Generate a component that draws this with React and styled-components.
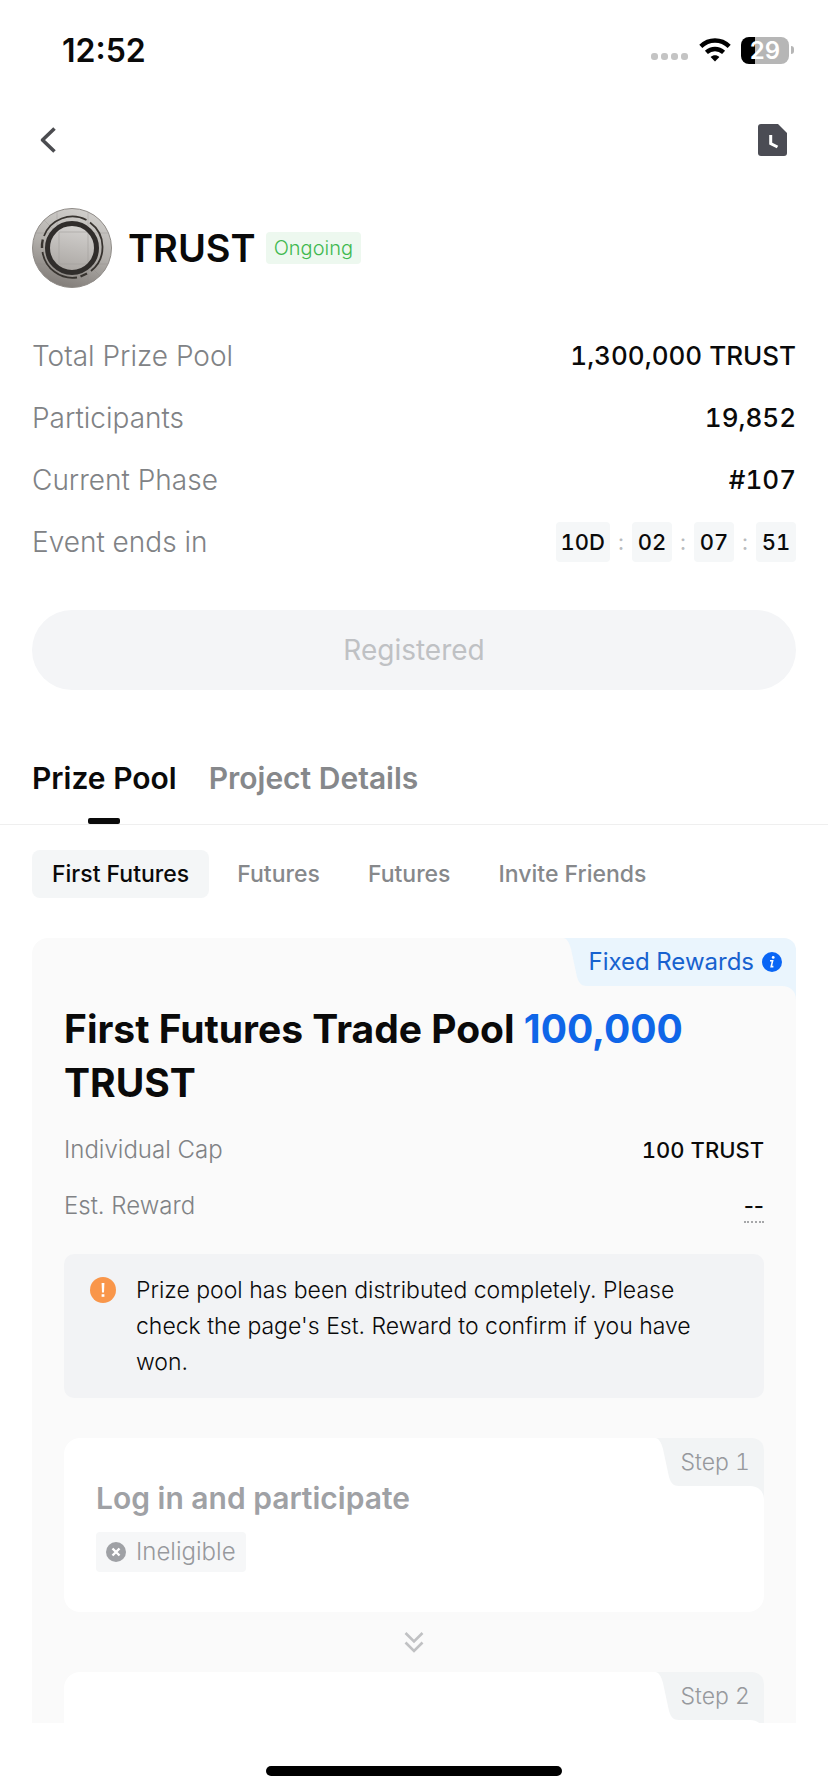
import { useState } from "react";
import styled, { createGlobalStyle } from "styled-components";

const steps = [
  { label: "Step 1", title: "Log in and participate", status: "Ineligible" },
  { label: "Step 2" },
];

const tabs = ["Prize Pool", "Project Details"];
const pools = ["First Futures", "Futures", "Futures", "Invite Friends"];
const countdown = ["10D", "02", "07", "51"];

export default function App() {
  const [tab, setTab] = useState(0);
  const [pool, setPool] = useState(0);

  return (
    <Page>
      <GlobalStyle />
      <StatusBar>
        <Clock>12:52</Clock>
        <StatusIcons>
          <SignalDots />
          <WifiIcon />
          <Battery>
            <BatteryBody>29</BatteryBody>
            <BatteryNub />
          </Battery>
        </StatusIcons>
      </StatusBar>

      <NavBar>
        <IconButton type="button" aria-label="Back">
          <BackIcon />
        </IconButton>
        <IconButton type="button" aria-label="History">
          <RecordIcon />
        </IconButton>
      </NavBar>

      <Content>
        <Header>
          <CoinLogo />
          <h1>TRUST</h1>
          <StatusTag>Ongoing</StatusTag>
        </Header>

        <InfoList>
          <InfoRow>
            <dt>Total Prize Pool</dt>
            <dd>1,300,000 TRUST</dd>
          </InfoRow>
          <InfoRow>
            <dt>Participants</dt>
            <dd>19,852</dd>
          </InfoRow>
          <InfoRow>
            <dt>Current Phase</dt>
            <dd>#107</dd>
          </InfoRow>
          <InfoRow>
            <dt>Event ends in</dt>
            <Countdown>
              {countdown.map((part, i) => (
                <CountdownPart key={part}>
                  {i > 0 && <Colon>:</Colon>}
                  <TimeBox>{part}</TimeBox>
                </CountdownPart>
              ))}
            </Countdown>
          </InfoRow>
        </InfoList>

        <RegisterButton type="button" disabled>
          Registered
        </RegisterButton>

        <Tabs>
          {tabs.map((name, i) => (
            <Tab
              key={name}
              type="button"
              $active={tab === i}
              onClick={() => setTab(i)}
            >
              {name}
            </Tab>
          ))}
        </Tabs>

        <PoolTabs>
          {pools.map((name, i) => (
            <PoolTab
              key={i}
              type="button"
              $active={pool === i}
              onClick={() => setPool(i)}
            >
              {name}
            </PoolTab>
          ))}
        </PoolTabs>

        <PoolCard>
          <CornerLabel tone="blue">
            Fixed Rewards
            <InfoIcon />
          </CornerLabel>
          <h2>
            First Futures Trade Pool <span>100,000</span> TRUST
          </h2>
          <CapList>
            <CapRow>
              <dt>Individual Cap</dt>
              <dd>100 TRUST</dd>
            </CapRow>
            <CapRow>
              <dt>Est. Reward</dt>
              <dd>
                <Dotted>--</Dotted>
              </dd>
            </CapRow>
          </CapList>
          <Notice>
            <div className="icon">
              <WarningIcon />
            </div>
            <p>
              Prize pool has been distributed completely. Please check the
              page's Est. Reward to confirm if you have won.
            </p>
          </Notice>
          {steps.map((step, i) => (
            <div key={step.label}>
              {i > 0 && (
                <StepArrow>
                  <DoubleDownIcon />
                </StepArrow>
              )}
              <StepCard>
                <CornerLabel tone="grey">{step.label}</CornerLabel>
                {step.title && <h3>{step.title}</h3>}
                {step.status && (
                  <StepStatus>
                    <CrossIcon />
                    {step.status}
                  </StepStatus>
                )}
              </StepCard>
            </div>
          ))}
        </PoolCard>
      </Content>

      <HomeBar>
        <HomeIndicator />
      </HomeBar>
    </Page>
  );
}

function CornerLabel({ tone, children }) {
  const color = tone === "blue" ? "#eaf5fd" : "#f2f4f5";
  return (
    <Corner $tone={tone}>
      <svg width="26" height="48" viewBox="0 0 26 48">
        <path
          d="M0 0H26V48H24C18 48 16 45 14 39L8 11C6 4 4 0 0 0Z"
          fill={color}
        />
      </svg>
      <CornerBody $color={color}>{children}</CornerBody>
      <CornerTail width="14" height="14" viewBox="0 0 14 14">
        <path d="M0 0H14V14C14 5 8 0 0 0Z" fill={color} />
      </CornerTail>
    </Corner>
  );
}

function SignalDots() {
  return (
    <svg width="38" height="8" viewBox="0 0 38 8" fill="#c4c4c4">
      <rect x="0" width="7" height="7" rx="3" />
      <rect x="10" width="7" height="7" rx="3" />
      <rect x="20" width="7" height="7" rx="3" />
      <rect x="30" width="7" height="7" rx="3" />
    </svg>
  );
}

function WifiIcon() {
  return (
    <svg width="32" height="24" viewBox="0 0 32 24" fill="none" stroke="#000">
      <path d="M1.8 8.4C10 .6 22 .6 30.2 8.4" strokeWidth="4.4" />
      <path d="M7.4 14.4C12.4 9.8 19.6 9.8 24.6 14.4" strokeWidth="4.4" />
      <path
        d="M16 23.4L11.6 19C14.2 16.8 17.8 16.8 20.4 19Z"
        fill="#000"
        stroke="none"
      />
    </svg>
  );
}

function BackIcon() {
  return (
    <svg width="32" height="32" viewBox="0 0 32 32" fill="none">
      <path
        d="M22.5 4.5L10.5 16L22.5 27.5"
        stroke="#4b4c50"
        strokeWidth="3.6"
        strokeLinejoin="round"
      />
    </svg>
  );
}

function RecordIcon() {
  return (
    <svg width="30" height="32" viewBox="0 0 30 32">
      <path
        d="M3 0H20L29 9V29A3 3 0 0 1 26 32H3A3 3 0 0 1 0 29V3A3 3 0 0 1 3 0Z"
        fill="#4b4c54"
      />
      <path
        d="M12.7 11V19.5L19.5 23"
        fill="none"
        stroke="#fff"
        strokeWidth="3"
      />
    </svg>
  );
}

function CoinLogo() {
  return (
    <svg width="80" height="80" viewBox="0 0 80 80" fill="none">
      <defs>
        <linearGradient id="coin" x1="0.6" y1="0" x2="0.3" y2="1">
          <stop offset="0" stopColor="#d0cecb" />
          <stop offset="0.5" stopColor="#b2afab" />
          <stop offset="1" stopColor="#7f7a76" />
        </linearGradient>
        <linearGradient id="face" x1="0.6" y1="0" x2="0.4" y2="1">
          <stop offset="0" stopColor="#d6d4d2" />
          <stop offset="1" stopColor="#aaa6a2" />
        </linearGradient>
      </defs>
      <circle cx="40" cy="40" r="39.5" fill="url(#coin)" stroke="#8f8b87" />
      <path
        d="M25 4V76M56 4V76M4 25H76M4 56H76M12 12L68 68"
        stroke="#8d8986"
        strokeWidth="0.6"
        opacity="0.5"
      />
      <circle cx="40" cy="39" r="25" fill="url(#face)" />
      <path
        d="M27 24H56V56H27Z"
        stroke="#a5a19e"
        strokeWidth="0.8"
        opacity="0.8"
      />
      <circle cx="40" cy="40" r="24.5" stroke="#302d2b" strokeWidth="5" />
      <g stroke="#37332f" strokeWidth="1.8">
        <path d="M12 28A30.5 30.5 0 0 1 54.5 12" />
        <path d="M58 14.5A30.5 30.5 0 0 1 59 63" />
        <path d="M55 65.5L48.5 68.5" strokeWidth="2.4" />
        <path d="M45 69.5A30.5 30.5 0 0 1 10.5 44" />
        <path d="M10 40A30 30 0 0 1 10.8 31.5" strokeWidth="2.4" />
      </g>
    </svg>
  );
}

function InfoIcon() {
  return (
    <svg width="20" height="20" viewBox="0 0 20 20">
      <circle cx="10" cy="10" r="10" fill="#0a66f5" />
      <circle cx="11.2" cy="5.4" r="1.4" fill="#fff" />
      <path
        d="M8 8.8H10.6L9.2 14.6H11.4"
        fill="none"
        stroke="#fff"
        strokeWidth="1.6"
      />
    </svg>
  );
}

function WarningIcon() {
  return (
    <svg width="26" height="26" viewBox="0 0 26 26">
      <circle cx="13" cy="13" r="13" fill="#f9964a" />
      <path d="M11.6 6H14.4L14 15.5H12Z" fill="#fff" />
      <rect x="11.6" y="17.2" width="2.8" height="2.6" fill="#fff" />
    </svg>
  );
}

function CrossIcon() {
  return (
    <svg width="20" height="20" viewBox="0 0 20 20">
      <circle cx="10" cy="10" r="10" fill="#9fa1a5" />
      <path
        d="M6.5 6.5L13.5 13.5M13.5 6.5L6.5 13.5"
        stroke="#fff"
        strokeWidth="2.4"
      />
    </svg>
  );
}

function DoubleDownIcon() {
  return (
    <svg width="20" height="22" viewBox="0 0 20 22" fill="none">
      <path
        d="M1.5 2L10 10.5L18.5 2M1.5 11.5L10 20L18.5 11.5"
        stroke="#c0c1c3"
        strokeWidth="2.6"
      />
    </svg>
  );
}

const GlobalStyle = createGlobalStyle`
  * {
    box-sizing: border-box;
  }
  body {
    margin: 0;
    background-color: #fff;
    color: #0a0a0a;
    font-family: "Inter", "Liberation Sans", sans-serif;
  }
  h1, h2, h3, p, dl, dd {
    margin: 0;
  }
  button {
    border: none;
    padding: 0;
    background: none;
    font-family: inherit;
    cursor: pointer;
  }
  svg {
    display: block;
    flex-shrink: 0;
  }
`;

const Page = styled.div`
  display: flex;
  flex-direction: column;
  height: 100vh;
`;

const StatusBar = styled.div`
  display: flex;
  justify-content: space-between;
  align-items: center;
  flex-shrink: 0;
  height: 100px;
  padding: 0 34px 0 62px;
`;

const Clock = styled.span`
  font-size: 32px;
  font-weight: 600;
`;

const StatusIcons = styled.div`
  display: flex;
  align-items: center;
  gap: 10px;

  svg:first-child {
    margin-top: 14px;
  }
`;

const Battery = styled.div`
  display: flex;
  align-items: center;
  gap: 2px;
`;

const BatteryBody = styled.div`
  width: 48px;
  height: 27px;
  border-radius: 8px;
  background: linear-gradient(to right, #000 29%, #b6b6b6 29%);
  color: #fff;
  font-size: 24px;
  font-weight: 600;
  line-height: 27px;
  text-align: center;
`;

const BatteryNub = styled.div`
  width: 3px;
  height: 8px;
  border-radius: 0 4px 4px 0;
  background-color: #b6b6b6;
`;

const NavBar = styled.div`
  display: flex;
  justify-content: space-between;
  align-items: center;
  flex-shrink: 0;
  height: 80px;
  padding: 0 40px 0 32px;
`;

const IconButton = styled.button`
  display: flex;
`;

const Content = styled.main`
  flex: 1;
  min-height: 0;
  overflow-y: auto;
  scrollbar-width: none;
`;

const Header = styled.div`
  display: flex;
  align-items: center;
  padding: 28px 32px 0;

  h1 {
    margin: 0 10px 0 16px;
    font-size: 38px;
    font-weight: 600;
  }
`;

const StatusTag = styled.span`
  padding: 0 8px;
  border-radius: 4px;
  background-color: #edf8ef;
  color: #3fb950;
  font-size: 20px;
  font-weight: 300;
  line-height: 32px;
`;

const InfoList = styled.dl`
  display: flex;
  flex-direction: column;
  gap: 22px;
  padding: 48px 32px;
`;

const InfoRow = styled.div`
  display: flex;
  justify-content: space-between;
  line-height: 40px;

  dt {
    color: #808285;
    font-size: 28px;
    font-weight: 300;
  }

  dd {
    font-size: 26px;
    font-weight: 500;
    font-variant-numeric: tabular-nums;
  }
`;

const Countdown = styled.dd`
  display: flex;
`;

const CountdownPart = styled.span`
  display: flex;
  font-size: 22px;
`;

const TimeBox = styled.span`
  min-width: 40px;
  padding: 0 5px;
  border-radius: 4px;
  background-color: #f5f7f8;
  text-align: center;
`;

const Colon = styled.span`
  width: 22px;
  color: #b9bbbe;
  font-weight: 400;
  text-align: center;
`;

const RegisterButton = styled.button`
  display: block;
  width: calc(100% - 64px);
  height: 80px;
  margin: 0 32px;
  border-radius: 40px;
  background-color: #f4f5f7;
  color: #bfc1c4;
  font-size: 28px;
  font-weight: 400;
  cursor: default;
`;

const Tabs = styled.div`
  display: flex;
  gap: 32px;
  margin-top: 68px;
  padding: 0 32px;
  border-bottom: 1px solid #efefef;
`;

const Tab = styled.button`
  display: flex;
  flex-direction: column;
  align-items: center;
  color: ${({ $active }) => ($active ? "#0a0a0a" : "#86888b")};
  font-size: 30px;
  font-weight: 600;
  line-height: 40px;

  &::after {
    content: "";
    width: 32px;
    height: 6px;
    margin-top: 20px;
    border-radius: 2px;
    background-color: ${({ $active }) => ($active ? "#0a0a0a" : "transparent")};
  }
`;

const PoolTabs = styled.div`
  display: flex;
  gap: 8px;
  padding: 25px 32px 40px;
`;

const PoolTab = styled.button`
  height: 48px;
  padding: 0 20px;
  border-radius: 8px;
  background-color: ${({ $active }) => ($active ? "#f4f6f7" : "transparent")};
  color: ${({ $active }) => ($active ? "#0a0a0a" : "#86888b")};
  font-size: 23px;
  font-weight: 500;
`;

const PoolCard = styled.section`
  position: relative;
  margin: 0 32px;
  padding: 64px 32px 32px;
  border-radius: 16px;
  background-color: #fafafa;

  h2 {
    font-size: 39px;
    font-weight: 700;
    line-height: 54px;

    span {
      color: #0f66e8;
    }
  }
`;

const Corner = styled.div`
  position: absolute;
  top: 0;
  right: 0;
  display: flex;
  color: ${({ $tone }) => ($tone === "blue" ? "#1862cf" : "#97999d")};
  font-size: ${({ $tone }) => ($tone === "blue" ? "24px" : "23px")};
  font-weight: ${({ $tone }) => ($tone === "blue" ? 400 : 300)};
  font-variant-numeric: tabular-nums;
  line-height: 48px;
`;

const CornerBody = styled.div`
  display: flex;
  align-items: center;
  gap: 8px;
  padding-right: 14px;
  border-top-right-radius: 12px;
  background-color: ${({ $color }) => $color};
`;

const CornerTail = styled.svg`
  position: absolute;
  top: 48px;
  right: 0;
`;

const CapList = styled.dl`
  display: flex;
  flex-direction: column;
  gap: 22px;
  padding: 23px 0 31px;
`;

const CapRow = styled.div`
  display: flex;
  justify-content: space-between;
  line-height: 34px;

  dt {
    color: #808285;
    font-size: 24px;
    font-weight: 300;
  }

  dd {
    font-size: 22px;
    font-weight: 500;
    font-variant-numeric: tabular-nums;
  }
`;

const Dotted = styled.span`
  display: block;
  height: 34px;
  border-bottom: 2px dotted #a6a7a9;
  font-variant-numeric: normal;
`;

const Notice = styled.div`
  display: flex;
  gap: 20px;
  margin-bottom: 40px;
  padding: 18px 40px 18px 26px;
  border-radius: 10px;
  background-color: #f2f3f5;
  font-size: 23px;
  font-weight: 300;
  line-height: 36px;

  .icon {
    display: flex;
    align-items: center;
    height: 36px;
  }
`;

const StepCard = styled.div`
  position: relative;
  min-height: 174px;
  padding: 40px 32px;
  border-radius: 16px;
  background-color: #fff;

  h3 {
    margin-bottom: 14px;
    color: #9fa1a5;
    font-size: 30px;
    font-weight: 600;
    line-height: 40px;
  }
`;

const StepStatus = styled.span`
  display: inline-flex;
  align-items: center;
  gap: 10px;
  padding: 0 10px;
  border-radius: 4px;
  background-color: #f6f7f8;
  color: #97999d;
  font-size: 24px;
  font-weight: 300;
  line-height: 40px;
`;

const StepArrow = styled.div`
  display: flex;
  justify-content: center;
  align-items: center;
  height: 60px;
`;

const HomeBar = styled.div`
  display: flex;
  justify-content: center;
  align-items: flex-end;
  flex-shrink: 0;
  height: 69px;
  padding-bottom: 16px;
`;

const HomeIndicator = styled.div`
  width: 296px;
  height: 10px;
  border-radius: 5px;
  background-color: #000;
`;
